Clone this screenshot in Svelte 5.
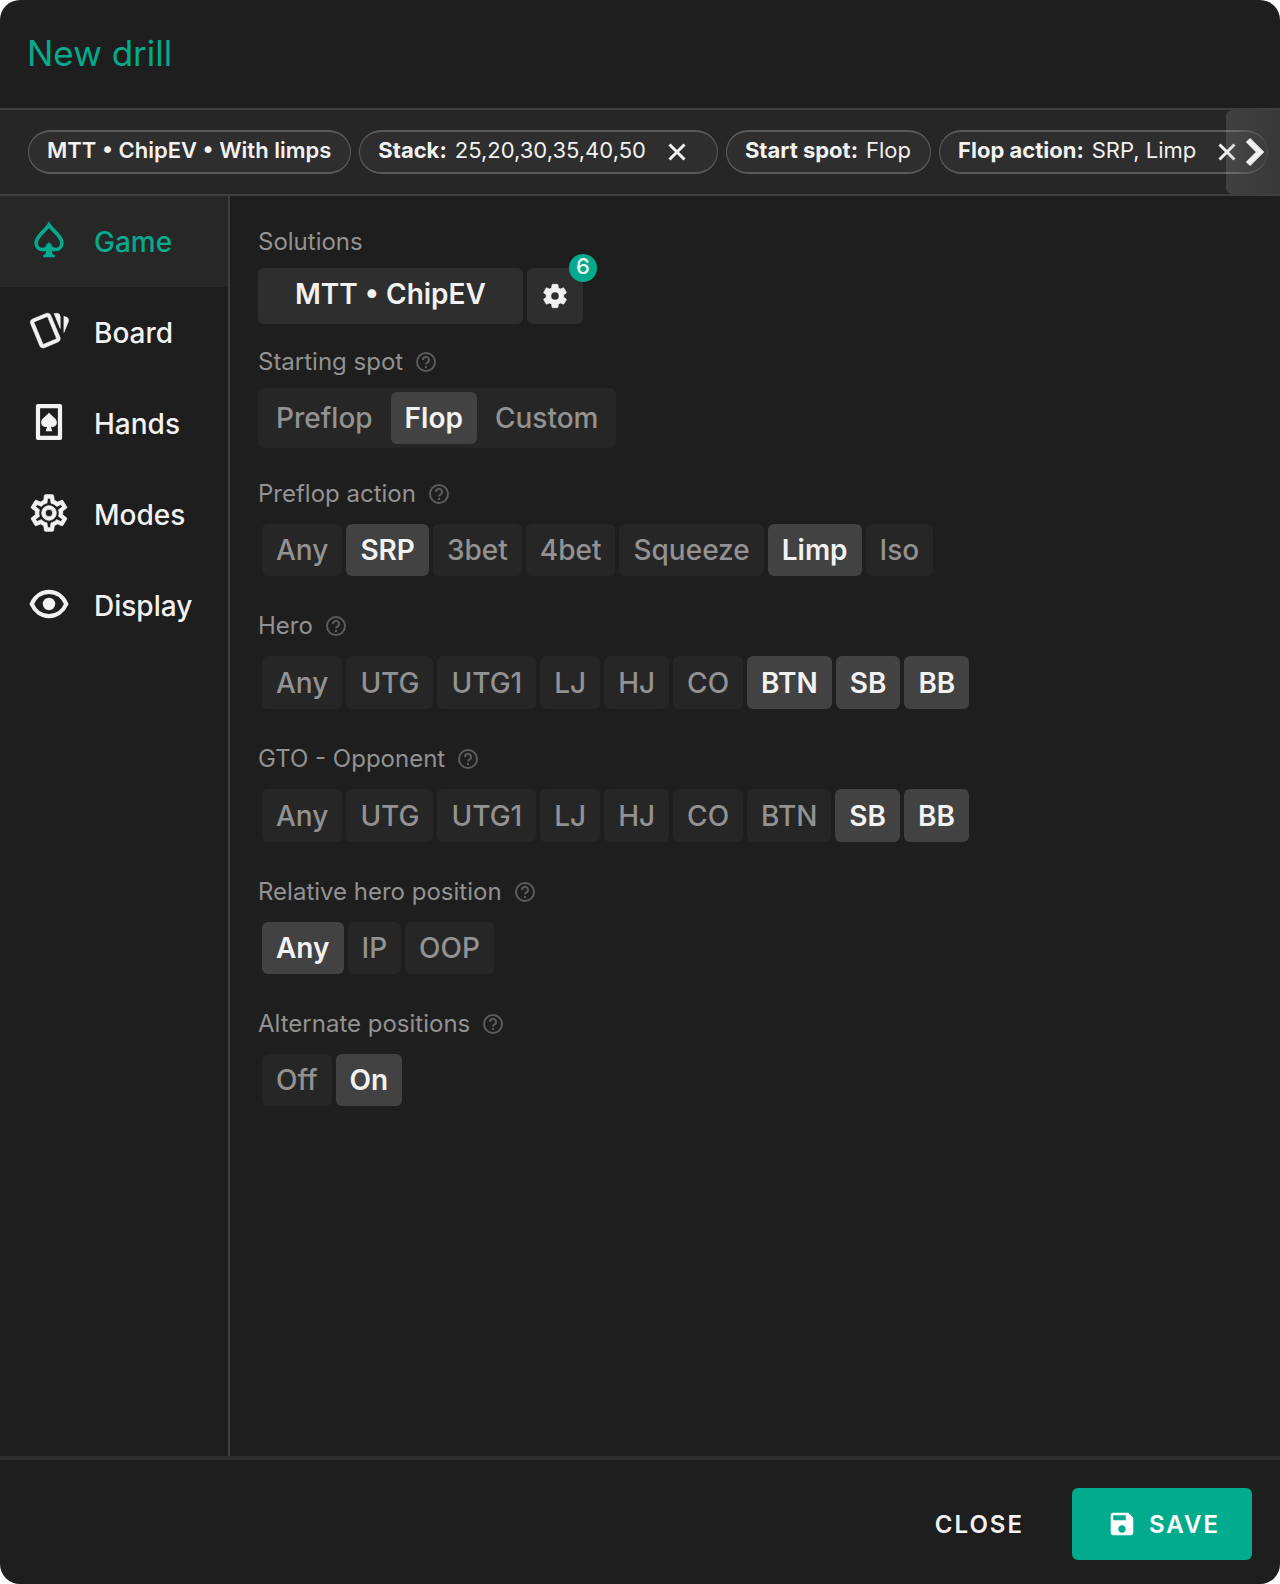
<script lang="ts">
	interface Chip {
		label?: string;
		value?: string;
		closable?: boolean;
	}

	interface Group {
		title: string;
		options: string[];
		selected: string[];
		multiple?: boolean;
		joined?: boolean;
		tall?: boolean;
	}

	const chips: Chip[] = [
		{ value: 'MTT • ChipEV • With limps' },
		{ label: 'Stack:', value: '25,20,30,35,40,50', closable: true },
		{ label: 'Start spot:', value: 'Flop' },
		{ label: 'Flop action:', value: 'SRP, Limp', closable: true }
	];

	const tabs = ['Game', 'Board', 'Hands', 'Modes', 'Display'];
	const positions = ['Any', 'UTG', 'UTG1', 'LJ', 'HJ', 'CO', 'BTN', 'SB', 'BB'];

	let activeTab = $state('Game');

	let groups: Group[] = $state([
		{
			title: 'Starting spot',
			options: ['Preflop', 'Flop', 'Custom'],
			selected: ['Flop'],
			joined: true
		},
		{
			title: 'Preflop action',
			options: ['Any', 'SRP', '3bet', '4bet', 'Squeeze', 'Limp', 'Iso'],
			selected: ['SRP', 'Limp'],
			multiple: true
		},
		{
			title: 'Hero',
			options: positions,
			selected: ['BTN', 'SB', 'BB'],
			multiple: true,
			tall: true
		},
		{
			title: 'GTO - Opponent',
			options: positions,
			selected: ['SB', 'BB'],
			multiple: true,
			tall: true
		},
		{ title: 'Relative hero position', options: ['Any', 'IP', 'OOP'], selected: ['Any'] },
		{ title: 'Alternate positions', options: ['Off', 'On'], selected: ['On'] }
	]);

	function toggle(group: Group, option: string) {
		if (!group.multiple || option === 'Any') {
			group.selected = [option];
		} else if (group.selected.includes(option)) {
			group.selected = group.selected.filter((o) => o !== option);
		} else {
			group.selected = [...group.selected.filter((o) => o !== 'Any'), option];
		}
	}
</script>

<div class="dialog" role="dialog" aria-labelledby="dialog-title">
	<header>
		<h1 id="dialog-title">New drill</h1>
	</header>

	<div class="chip-bar">
		<div class="chips">
			{#each chips as chip}
				<div class="chip" class:plain={!chip.label}>
					{#if chip.label}<b>{chip.label}</b>{/if}
					<span>{chip.value}</span>
					{#if chip.closable}
						<button class="chip-close" aria-label="Remove {chip.label}">
							<svg width="18" height="18" viewBox="0 0 18 18" fill="none" stroke="currentColor" stroke-width="3">
								<path d="M1.500 1.500l15 15M16.500 1.500l-15 15" />
							</svg>
						</button>
					{/if}
				</div>
			{/each}
		</div>
		<button class="scroll-next" aria-label="Next">
			<svg width="20" height="34" viewBox="0 0 20 34" fill="none" stroke="currentColor" stroke-width="6">
				<path d="M3 5l12 12L3 29" />
			</svg>
		</button>
	</div>

	<div class="body">
		<nav>
			{#each tabs as tab}
				<button class="tab" class:active={tab === activeTab} onclick={() => (activeTab = tab)}>
					<svg width="44" height="44" viewBox="0 0 24 24" fill="currentColor">
						{#if tab === 'Game'}
							<path
								d="M12 3.8C10.4 6.6 5 9.7 5 13.5C5 15.7 6.5 17.2 8.4 17.2C9.9 17.2 11.2 16.4 12 15C12.8 16.4 14.1 17.2 15.6 17.2C17.5 17.2 19 15.7 19 13.5C19 9.7 13.6 6.6 12 3.8Z"
								fill="none"
								stroke="currentColor"
								stroke-width="2"
							/>
							<path d="M10.6 14h2.8l.3 5.200 1.500 1.200v1H8.800v-1l1.500-1.200z" />
						{:else if tab === 'Board'}
							<path
								d="M11.19,2.25C10.93,2.25 10.67,2.31 10.42,2.4L3.06,5.45C2.04,5.87 1.55,7.04 1.97,8.05L6.93,20C7.24,20.77 7.97,21.23 8.74,21.25C9,21.25 9.27,21.22 9.53,21.1L16.9,18.05C17.65,17.74 18.11,17 18.13,16.26C18.14,16 18.09,15.71 18,15.45L13,3.5C12.71,2.73 11.97,2.26 11.19,2.25M14.67,2.25L18.12,10.6V4.25A2,2 0 0,0 16.12,2.25M20.13,3.79V12.82L22.56,6.96C22.97,5.94 22.5,4.78 21.47,4.36M11.19,4.22L16.17,16.24L8.78,19.3L3.8,7.29"
								stroke="currentColor"
								stroke-width="0.3"
							/>
						{:else if tab === 'Hands'}
							<path
								d="M6 3.3h12v17.4H6z"
								fill="none"
								stroke="currentColor"
								stroke-width="2.3"
								stroke-linejoin="round"
							/>
							<path
								d="M12 6.800C10.900 8.600 7.700 9.900 7.700 12.300C7.700 14.300 9.700 15.200 11 14.400L10.200 17H13.800L13 14.400C14.300 15.200 16.300 14.300 16.300 12.300C16.300 9.900 13.100 8.600 12 6.800Z"
							/>
						{:else if tab === 'Modes'}
							<path
								d="M12,8A4,4 0 0,1 16,12A4,4 0 0,1 12,16A4,4 0 0,1 8,12A4,4 0 0,1 12,8M12,10A2,2 0 0,0 10,12A2,2 0 0,0 12,14A2,2 0 0,0 14,12A2,2 0 0,0 12,10M10,22C9.75,22 9.54,21.82 9.5,21.58L9.13,18.93C8.5,18.68 7.96,18.34 7.44,17.94L4.95,18.95C4.73,19.03 4.46,18.95 4.34,18.73L2.34,15.27C2.21,15.05 2.27,14.78 2.46,14.63L4.57,12.97L4.5,12L4.57,11L2.46,9.37C2.27,9.22 2.21,8.95 2.34,8.73L4.34,5.27C4.46,5.05 4.73,4.96 4.95,5.05L7.44,6.05C7.96,5.66 8.5,5.32 9.13,5.07L9.5,2.42C9.54,2.18 9.75,2 10,2H14C14.25,2 14.46,2.18 14.5,2.42L14.87,5.07C15.5,5.32 16.04,5.66 16.56,6.05L19.05,5.05C19.27,4.96 19.54,5.05 19.66,5.27L21.66,8.73C21.79,8.95 21.73,9.22 21.54,9.37L19.43,11L19.5,12L19.43,13L21.54,14.63C21.73,14.78 21.79,15.05 21.66,15.27L19.66,18.73C19.54,18.95 19.27,19.04 19.05,18.95L16.56,17.95C16.04,18.34 15.5,18.68 14.87,18.93L14.5,21.58C14.46,21.82 14.25,22 14,22H10M11.25,4L10.88,6.61C9.68,6.86 8.62,7.5 7.85,8.39L5.44,7.35L4.69,8.65L6.8,10.2C6.4,11.37 6.4,12.64 6.8,13.8L4.68,15.36L5.43,16.66L7.86,15.62C8.63,16.5 9.68,17.14 10.87,17.38L11.24,20H12.76L13.13,17.39C14.32,17.14 15.37,16.5 16.14,15.62L18.57,16.66L19.32,15.36L17.2,13.81C17.6,12.64 17.6,11.37 17.2,10.2L19.31,8.65L18.56,7.35L16.15,8.39C15.38,7.5 14.32,6.86 13.12,6.62L12.75,4H11.25Z"
								stroke="currentColor"
								stroke-width="0.4"
							/>
						{:else}
							<path
								d="M2.6 12C4.3 8 7.8 5.4 12 5.4S19.7 8 21.4 12C19.7 16 16.2 18.6 12 18.6S4.3 16 2.6 12Z"
								fill="none"
								stroke="currentColor"
								stroke-width="2.3"
							/>
							<circle cx="12" cy="12" r="3.4" />
						{/if}
					</svg>
					<span>{tab}</span>
				</button>
			{/each}
		</nav>

		<main>
			<section class="solutions">
				<h2>Solutions</h2>
				<div class="solution-row">
					<button class="solution">MTT • ChipEV</button>
					<button class="solution-settings" aria-label="Solution settings">
						<svg width="28" height="28" viewBox="0 0 24 24" fill="currentColor" stroke="currentColor" stroke-width="0.6">
							<path
								d="M12,15.5A3.5,3.5 0 0,1 8.5,12A3.5,3.5 0 0,1 12,8.5A3.5,3.5 0 0,1 15.5,12A3.5,3.5 0 0,1 12,15.5M19.43,12.97C19.47,12.65 19.5,12.33 19.5,12C19.5,11.67 19.47,11.34 19.43,11L21.54,9.37C21.73,9.22 21.78,8.95 21.66,8.73L19.66,5.27C19.54,5.05 19.27,4.96 19.05,5.05L16.56,6.05C16.04,5.66 15.5,5.32 14.87,5.07L14.5,2.42C14.46,2.18 14.25,2 14,2H10C9.75,2 9.54,2.18 9.5,2.42L9.13,5.07C8.5,5.32 7.96,5.66 7.44,6.05L4.95,5.05C4.73,4.96 4.46,5.05 4.34,5.27L2.34,8.73C2.21,8.95 2.27,9.22 2.46,9.37L4.57,11C4.53,11.34 4.5,11.67 4.5,12C4.5,12.33 4.53,12.65 4.57,12.97L2.46,14.63C2.27,14.78 2.21,15.05 2.34,15.27L4.34,18.73C4.46,18.95 4.73,19.03 4.95,18.95L7.44,17.94C7.96,18.34 8.5,18.68 9.13,18.93L9.5,21.58C9.54,21.82 9.75,22 10,22H14C14.25,22 14.46,21.82 14.5,21.58L14.87,18.93C15.5,18.67 16.04,18.34 16.56,17.94L19.05,18.95C19.27,19.03 19.54,18.95 19.66,18.73L21.66,15.27C21.78,15.05 21.73,14.78 21.54,14.63L19.43,12.97Z"
							/>
						</svg>
						<span class="count">6</span>
					</button>
				</div>
			</section>

			{#each groups as group}
				<section>
					<h2>
						{group.title}
						<svg class="help" width="22" height="22" viewBox="0 0 22 22" fill="none" stroke="currentColor" stroke-width="2">
							<circle cx="11" cy="11" r="9" />
							<path d="M8 9a3 3 0 1 1 4.6 2.4C11.5 12.1 11 12.5 11 13.6M11 15v2" />
						</svg>
					</h2>
					<div
						class="options"
						class:joined={group.joined}
						class:tall={group.tall}
						role="group"
						aria-label={group.title}
					>
						{#each group.options as option}
							<button
								class="option"
								class:selected={group.selected.includes(option)}
								aria-pressed={group.selected.includes(option)}
								onclick={() => toggle(group, option)}
							>
								{option}
							</button>
						{/each}
					</div>
				</section>
			{/each}
		</main>
	</div>

	<footer>
		<button class="close">CLOSE</button>
		<button class="save">
			<svg width="30" height="30" viewBox="0 0 24 24" fill="currentColor">
				<path
					d="M17 3H5C3.89 3 3 3.9 3 5V19C3 20.1 3.89 21 5 21H19C20.1 21 21 20.1 21 19V7L17 3M12 19C10.34 19 9 17.66 9 16S10.34 13 12 13 15 14.34 15 16 13.66 19 12 19M15 9H5V5H15V9Z"
				/>
			</svg>
			SAVE
		</button>
	</footer>
</div>

<style>
	:global(body) {
		background: #fff;
	}

	.dialog {
		display: flex;
		flex-direction: column;
		min-height: 100vh;
		overflow: hidden;
		border-radius: 20px;
		background: #1e1e1e;
		color: #f2f2f2;
		font-family: Inter, 'Liberation Sans', sans-serif;
	}

	button {
		margin: 0;
		padding: 0;
		border: 0;
		background: none;
		color: inherit;
		font: inherit;
		cursor: pointer;
	}

	svg {
		flex: none;
		display: block;
	}

	header {
		padding: 31px 27px 33px;
		border-bottom: 2px solid #3e3e3e;
	}

	h1 {
		margin: 0;
		font-size: 35px;
		font-weight: 400;
		line-height: 44px;
		color: #02ab8d;
	}

	.chip-bar {
		position: relative;
		padding: 20px 28px;
		overflow: hidden;
		border-bottom: 2px solid #3e3e3e;
		background: #262626;
	}

	.chips {
		display: flex;
		gap: 8px;
	}

	.chip {
		flex: none;
		display: flex;
		align-items: center;
		gap: 8px;
		box-sizing: border-box;
		height: 44px;
		padding: 0 19px 4px 18px;
		border: 2px solid #5a5a5a;
		border-width: 2px 1px;
		border-radius: 22px;
		background: #2e2e2e;
		font-size: 22px;
		white-space: nowrap;
	}

	.chip.plain {
		font-weight: 600;
	}

	.chip b {
		font-weight: 700;
	}

	.chip-close {
		margin: 4px 12px 0 14px;
	}

	/* lies over the chips that run past the edge */
	.scroll-next {
		position: absolute;
		top: 0;
		right: 0;
		bottom: 0;
		display: flex;
		align-items: center;
		justify-content: center;
		width: 54px;
		padding-left: 4px;
		border-radius: 6px 0 0 6px;
		background: linear-gradient(90deg, rgba(255, 255, 255, 0.12), rgba(58, 58, 58, 0.9));
		color: #f2f2f2;
	}

	.body {
		flex: 1;
		display: flex;
	}

	nav {
		flex: none;
		box-sizing: border-box;
		width: 230px;
		border-right: 2px solid #3e3e3e;
	}

	.tab {
		display: flex;
		align-items: center;
		gap: 23px;
		width: 100%;
		height: 91px;
		padding: 0 27px;
		font-size: 28px;
		font-weight: 500;
	}

	.tab svg {
		margin-bottom: 4px;
	}

	.tab.active {
		background: #272727;
		color: #02ab8d;
	}

	main {
		flex: 1;
		min-width: 0;
		padding: 30px 28px;
	}

	section {
		margin-bottom: 30px;
	}

	.solutions {
		margin-bottom: 22px;
	}

	h2 {
		display: flex;
		align-items: center;
		gap: 12px;
		margin: 0 0 10px;
		font-size: 24px;
		font-weight: 400;
		line-height: 32px;
		color: #929292;
	}

	.help {
		color: #5c5c5c;
	}

	.solution-row {
		display: flex;
		gap: 4px;
	}

	.solution,
	.solution-settings {
		height: 56px;
		border-radius: 6px;
		background: #2e2e2e;
	}

	.solution {
		padding: 0 37px 4px;
		font-size: 28px;
		font-weight: 600;
	}

	.solution-settings {
		position: relative;
		display: flex;
		align-items: center;
		justify-content: center;
		width: 56px;
	}

	.count {
		position: absolute;
		top: -14px;
		right: -14px;
		width: 28px;
		height: 28px;
		border-radius: 50%;
		background: #02ab8d;
		font-size: 22px;
		font-weight: 500;
		line-height: 25px;
		text-align: center;
	}

	.options {
		display: flex;
		flex-wrap: wrap;
		gap: 4px;
		width: fit-content;
		padding: 4px;
		border-radius: 6px;
	}

	.option {
		height: 52px;
		padding: 0 14px;
		border-radius: 6px;
		background: #262626;
		color: #929292;
		font-size: 28px;
		font-weight: 500;
	}

	.tall .option {
		height: 53px;
	}

	.joined {
		background: #262626;
	}

	.option.selected {
		background: #424242;
		color: #f2f2f2;
		font-weight: 600;
	}

	footer {
		display: flex;
		align-items: center;
		justify-content: flex-end;
		gap: 48px;
		padding: 28px 28px 24px;
		border-top: 4px solid #2e2e2e;
	}

	.close,
	.save {
		font-size: 24px;
		font-weight: 600;
		letter-spacing: 2px;
	}

	.save {
		display: flex;
		align-items: center;
		gap: 12px;
		height: 72px;
		padding: 0 32px 0 35px;
		border-radius: 6px;
		background: #02ab8d;
		color: #fff;
	}
</style>
